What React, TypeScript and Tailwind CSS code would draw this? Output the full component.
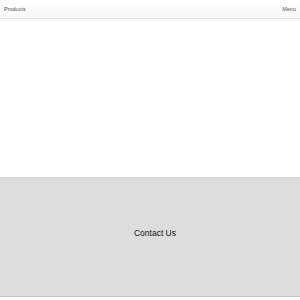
import React from "react";

export default function App() {
  return (
    <div className="w-[300px] h-[300px] bg-white flex flex-col" style={{ fontFamily: '"Liberation Sans", Arial, sans-serif' }}>
      <div className="h-[19px] shrink-0 flex items-center justify-between pl-[4px] pr-[4px] bg-gradient-to-b from-white to-[#f7f7f7] border-b border-[#e2e2e2] text-[5.5px] text-[#555]">
        <span>Products</span>
        <span>Menu</span>
      </div>
      <div className="h-[158px] shrink-0 bg-white" />
      <div className="h-[120px] shrink-0 bg-[#dddddd] border-t border-[#d2d2d2] border-b border-b-[#c8c8c8] flex items-center justify-center">
        <span className="text-[8.5px] text-[#111] ml-[10px] translate-y-[-4px]">Contact Us</span>
      </div>
      <div className="flex-1 bg-white" />
    </div>
  );
}
